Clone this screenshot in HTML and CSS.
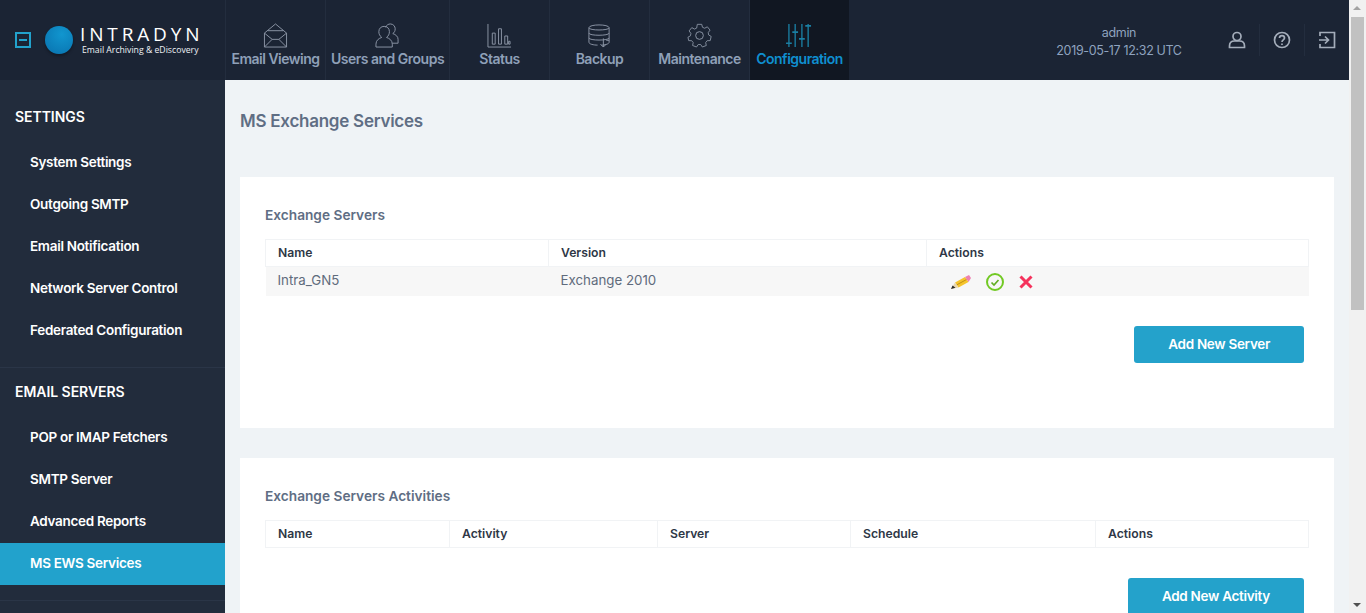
FILE: index.html
```html
<!DOCTYPE html>
<html lang="en">
<head>
    <meta charset="UTF-8">
    <title>MS Exchange Services</title>
    <link rel="stylesheet" href="styles.css">
</head>
<body>
    <div class="app">
        <header class="topbar">
            <div class="brand">
                <span class="collapse-btn"><span></span></span>
                <span class="logo-ball"></span>
                <div class="logo-text">
                    <div class="logo-name">INTRADYN</div>
                    <div class="logo-tag">Email Archiving &amp; eDiscovery</div>
                </div>
            </div>
            <nav class="mainnav">
                <a class="nav-item w100">
                    <svg class="nav-icon" viewBox="0 0 26 26"><path d="M1.500 10.500 13 1l11.500 9.500v14.500H1.500zM1.500 10.500l8 6.500h7l8-6.500M1.500 25l8-8M24.500 25l-8-8M5 8h16"/></svg>
                    Email Viewing
                </a>
                <a class="nav-item w124">
                    <svg class="nav-icon" viewBox="0 0 26 26"><path d="M1 25v-3c0-4 3-6 6-7-2-1.500-3-3.500-3-6 0-3.500 2.500-5.500 5.500-5.500S15 5.500 15 9c0 2.500-1 4.500-3 6 3 1 6 3 6 7v3zM11 4.500C12 2 14 1 16 1c3 0 5 2.500 5 5 0 2.500-1 4-2.500 5 3 1 5.500 3 5.500 6v4h-6"/></svg>
                    Users and Groups
                </a>
                <a class="nav-item w100">
                    <svg class="nav-icon" viewBox="0 0 26 26"><path d="M1 1v24h24M5.500 22V10.500h3V22zM12 22V6h3v16zM18.500 22V13.500h3V22zM24 22v-3h-1.500v3z"/></svg>
                    Status
                </a>
                <a class="nav-item w100">
                    <svg class="nav-icon" viewBox="0 0 26 26"><path d="M2 5c0-4 21-4 21 0v15c0 2-5 3-8 3M2 5c0 3 21 3 21 0M2 5v15c0 2 5 3 9 3M2 10.500c0 3 21 3 21 0M2 15.500c0 3 21 3 21 0M17 16v9M14 22l3 3 3-3M20 18h3"/></svg>
                    Backup
                </a>
                <a class="nav-item w100">
                    <svg class="nav-icon" viewBox="0 0 26 26"><circle cx="13" cy="13" r="4"/><path d="M10.500 1.500h5l.8 3.300 2.500 1.100 3-1.600 3 3.700-2 2.800.5 2.700 2.800 1.600-1.100 4.700-3.400.1-1.700 2.100.7 3.300-4.400 1.700-1.900-2.800h-2.800l-1.900 2.800-4.400-1.700.7-3.300-1.700-2.100-3.400-.1L0 16l2.800-1.600.5-2.700-2-2.800 3-3.700 3 1.600 2.500-1.100z" transform="translate(1 0) scale(.925)"/></svg>
                    Maintenance
                </a>
                <a class="nav-item w100 active">
                    <svg class="nav-icon" viewBox="0 0 26 26"><path d="M2 1v24M8.500 1v24M15.500 1v24M22 1v24" stroke-width="1.400"/><path d="M-1 21h6M5.500 9.500h6M12.500 16.500h6M19 3h6" stroke-width="1.600"/></svg>
                    Configuration
                </a>
            </nav>
            <div class="user-info">
                <div>admin</div>
                <div>2019-05-17 12:32 UTC</div>
            </div>
            <div class="top-tools">
                <span class="tool">
                    <svg viewBox="0 0 18 18"><circle cx="9" cy="5.500" r="4"/><path d="M1.500 16.500v-1.500c0-3 2-5 5-5h5c3 0 5 2 5 5v1.500z"/></svg>
                </span>
                <span class="tool">
                    <svg viewBox="0 0 18 18"><circle cx="9" cy="9" r="7.500"/><path d="M6.500 7c0-3.200 5-3.200 5 0 0 2-2.500 1.800-2.500 4M9 12.500v1.500"/></svg>
                </span>
                <span class="tool">
                    <svg viewBox="0 0 18 18"><path d="M2 5V1.500h14.500v15H2V13M1 9h9M7 5.500 10.500 9 7 12.500"/></svg>
                </span>
            </div>
        </header>
        <div class="body-row">
            <aside class="sidebar">
                <section class="side-group">
                    <h3>SETTINGS</h3>
                    <a>System Settings</a>
                    <a>Outgoing SMTP</a>
                    <a>Email Notification</a>
                    <a>Network Server Control</a>
                    <a>Federated Configuration</a>
                </section>
                <section class="side-group">
                    <h3>EMAIL SERVERS</h3>
                    <a>POP or IMAP Fetchers</a>
                    <a>SMTP Server</a>
                    <a>Advanced Reports</a>
                    <a class="active">MS EWS Services</a>
                </section>
            </aside>
            <main class="content">
                <h1>MS Exchange Services</h1>
                <section class="panel panel-servers">
                    <h2>Exchange Servers</h2>
                    <table class="grid">
                        <colgroup><col class="c283"><col class="c378"><col></colgroup>
                        <thead>
                            <tr><th>Name</th><th>Version</th><th>Actions</th></tr>
                        </thead>
                        <tbody>
                            <tr class="odd">
                                <td>Intra_GN5</td>
                                <td>Exchange 2010</td>
                                <td>
                                    <div class="actions">
                                        <svg class="pencil" viewBox="0 0 20 14">
                                            <path d="M4 7.500 14 2l3.500 5-10 5.500z" fill="#f5c42c"/>
                                            <path d="M5.500 10 15.500 4.500" stroke="#c08f12" fill="none"/>
                                            <path d="M14 2l4-2 2 3-2.500 4z" fill="#ee82b0"/>
                                            <path d="M4 7.500l3.500 5L0 14z" fill="#e8d6ae"/>
                                            <path d="M0 14l1.500-3.500 3 2.300z" fill="#2a2a2a"/>
                                        </svg>
                                        <svg class="ok" viewBox="0 0 18 18"><circle cx="9" cy="9" r="8" fill="none" stroke="#72c924" stroke-width="2"/><path d="M5.500 9.500 8 12l4.500-5" fill="none" stroke="#62ad24" stroke-width="1.700"/></svg>
                                        <svg class="del" viewBox="0 0 14 14"><path d="M1.500 1.500l11 11M12.500 1.500l-11 11" stroke="#f5325c" stroke-width="3"/></svg>
                                    </div>
                                </td>
                            </tr>
                        </tbody>
                    </table>
                    <div class="btn-row"><button class="btn">Add New Server</button></div>
                </section>
                <section class="panel">
                    <h2>Exchange Servers Activities</h2>
                    <table class="grid">
                        <colgroup><col class="c184"><col class="c208"><col class="c193"><col class="c245"><col></colgroup>
                        <thead>
                            <tr><th>Name</th><th>Activity</th><th>Server</th><th>Schedule</th><th>Actions</th></tr>
                        </thead>
                    </table>
                    <div class="btn-row"><button class="btn">Add New Activity</button></div>
                </section>
            </main>
            <div class="scroll-spacer"></div>
        </div>
    </div>
    <div class="scrollbar">
        <span class="arrow up"></span>
        <span class="thumb"></span>
        <span class="arrow down"></span>
    </div>
</body>
</html>
```

FILE: styles.css
```css
html, body {
    margin: 0;
    height: 100%;
    overflow: hidden;
}
body {
    font-family: Inter, "Noto Sans", sans-serif;
    font-size: 13px;
    color: #5f6b7c;
    background: #eff3f6;
}
.app {
    display: flex;
    flex-direction: column;
    height: 613px;
}
.topbar {
    display: flex;
    height: 80px;
    flex: none;
    background: #1b2434;
}
.brand {
    width: 225px;
    flex: none;
    display: flex;
    align-items: center;
    padding-left: 15px;
    box-sizing: border-box;
}
.collapse-btn {
    width: 16px;
    height: 16px;
    border: 2px solid #22a2cc;
    box-sizing: border-box;
    display: flex;
    align-items: center;
    justify-content: center;
    margin-right: 14px;
}
.collapse-btn span {
    width: 8px;
    height: 2px;
    background: #22a2cc;
}
.logo-ball {
    width: 28px;
    height: 28px;
    border-radius: 50%;
    background: radial-gradient(circle at 60% 30%, #1196cf, #0a78b4 80%);
    box-shadow: 0 2px 3px rgba(0, 0, 0, 0.3);
    margin-right: 7px;
}
.logo-text {
    padding-bottom: 1px;
}
.logo-name {
    font-family: "Open Sans", sans-serif;
    color: #fff;
    font-size: 19px;
    letter-spacing: 3.850px;
    line-height: 20px;
    margin-bottom: 1px;
    white-space: nowrap;
}
.logo-tag {
    color: #eef1f4;
    font-family: "Open Sans", sans-serif;
    font-size: 8.700px;
    line-height: 11px;
    white-space: nowrap;
    padding-left: 2px;
}
.mainnav {
    display: flex;
    flex: none;
}
.nav-item {
    display: flex;
    flex-direction: column;
    align-items: center;
    box-sizing: border-box;
    padding-top: 23px;
    border-left: 1px solid #232d3e;
    color: #8fa0b8;
    font-size: 14px;
    font-weight: 600;
    letter-spacing: -0.5px;
    white-space: nowrap;
    line-height: 17px;
}
.w100 {
    width: 100px;
}
.w124 {
    width: 124px;
}
.nav-item.active {
    background: #111722;
    color: #0f8fd0;
}
.nav-item.active .nav-icon {
    stroke: #1a7fa3;
}
.nav-icon {
    width: 25px;
    height: 25px;
    margin-bottom: 2px;
    fill: none;
    stroke: #8b95a5;
    stroke-width: 1;
    overflow: visible;
}
.user-info {
    width: 160px;
    margin-left: 190px;
    flex: none;
    text-align: center;
    color: #8fa3bf;
    font-size: 12.500px;
    letter-spacing: -0.35px;
    line-height: 18px;
    padding-top: 24px;
}
.top-tools {
    display: flex;
    flex: none;
    margin-left: 15px;
    padding-top: 24px;
}
.tool {
    width: 45px;
    height: 32px;
    display: flex;
    align-items: center;
    justify-content: center;
    border-left: 1px solid #232d3e;
    box-sizing: border-box;
}
.tool:first-child {
    border-left: 0;
}
.tool svg {
    width: 18px;
    height: 18px;
    fill: none;
    stroke: #a4adba;
    stroke-width: 1.700;
}
.body-row {
    display: flex;
    flex: 1;
    min-height: 0;
}
.sidebar {
    width: 225px;
    flex: none;
    background: #222c3c;
}
.side-group {
    padding-top: 28px;
    padding-bottom: 15px;
    border-bottom: 1px solid #2a3547;
}
.side-group + .side-group {
    padding-top: 15px;
}
.side-group h3 {
    margin: 0 0 16px;
    padding-left: 15px;
    color: #fff;
    font-size: 14px;
    font-weight: 600;
    line-height: 18px;
    letter-spacing: -0.05px;
}
.side-group a {
    display: block;
    height: 42px;
    line-height: 40px;
    padding-left: 30px;
    color: #fff;
    font-size: 13.500px;
    font-weight: 600;
    letter-spacing: -0.3px;
}
.side-group a.active {
    background: #22a2cc;
}
.content {
    flex: 1;
    padding: 0 15px;
    min-width: 0;
}
.content h1 {
    margin: 0;
    padding-top: 31px;
    height: 66px;
    font-size: 17px;
    line-height: 20px;
    font-weight: 600;
    color: #5f6e84;
    letter-spacing: -0.25px;
}
.panel {
    background: #fff;
    padding: 29px 25px 0;
    margin-bottom: 30px;
}
.panel-servers {
    height: 251px;
    box-sizing: border-box;
}
.panel h2 {
    margin: 0 0 14px;
    font-size: 13.700px;
    font-weight: 600;
    line-height: 19px;
    color: #5f6e84;
}
.grid {
    width: 1044px;
    border-collapse: collapse;
    table-layout: fixed;
    font-size: 13px;
}
.c283 { width: 283px; }
.c378 { width: 378px; }
.c184 { width: 184px; }
.c208 { width: 208px; }
.c193 { width: 193px; }
.c245 { width: 245px; }
.grid th {
    height: 24px;
    padding: 0 12px 2px;
    border: 1px solid #f1f3f5;
    text-align: left;
    font-weight: 600;
    color: #2e3746;
    font-size: 12.200px;
}
.grid td {
    height: 26px;
    padding: 0 12px 3px;
    color: #5f6b7c;
    background: #f7f7f7;
    font-size: 13.300px;
}
.actions {
    display: flex;
    align-items: center;
    padding: 3px 0 0 12px;
}
.pencil {
    width: 20px;
    height: 14px;
    margin-right: 15px;
}
.ok {
    width: 18px;
    height: 18px;
    margin-right: 15px;
}
.del {
    width: 14px;
    height: 14px;
}
.btn-row {
    display: flex;
    justify-content: flex-end;
    padding: 30px 5px 0 0;
}
.btn {
    height: 37px;
    padding: 0 34px 2px;
    background: #24a2cb;
    border: 0;
    border-radius: 3px;
    color: #fff;
    font-family: inherit;
    font-size: 13.500px;
    font-weight: 600;
    letter-spacing: -0.3px;
}
.scroll-spacer {
    width: 17px;
    flex: none;
}
.scrollbar {
    position: absolute;
    top: 0;
    right: 0;
    width: 17px;
    height: 613px;
    background: #f1f1f1;
}
.thumb {
    position: absolute;
    top: 17px;
    left: 2px;
    width: 13px;
    height: 293px;
    background: #c1c1c1;
}
.arrow {
    position: absolute;
    left: 4px;
    width: 0;
    height: 0;
    border-left: 4px solid transparent;
    border-right: 4px solid transparent;
}
.arrow.up {
    top: 6px;
    border-bottom: 4px solid #a3a3a3;
}
.arrow.down {
    bottom: 6px;
    border-top: 4px solid #505050;
}
```
